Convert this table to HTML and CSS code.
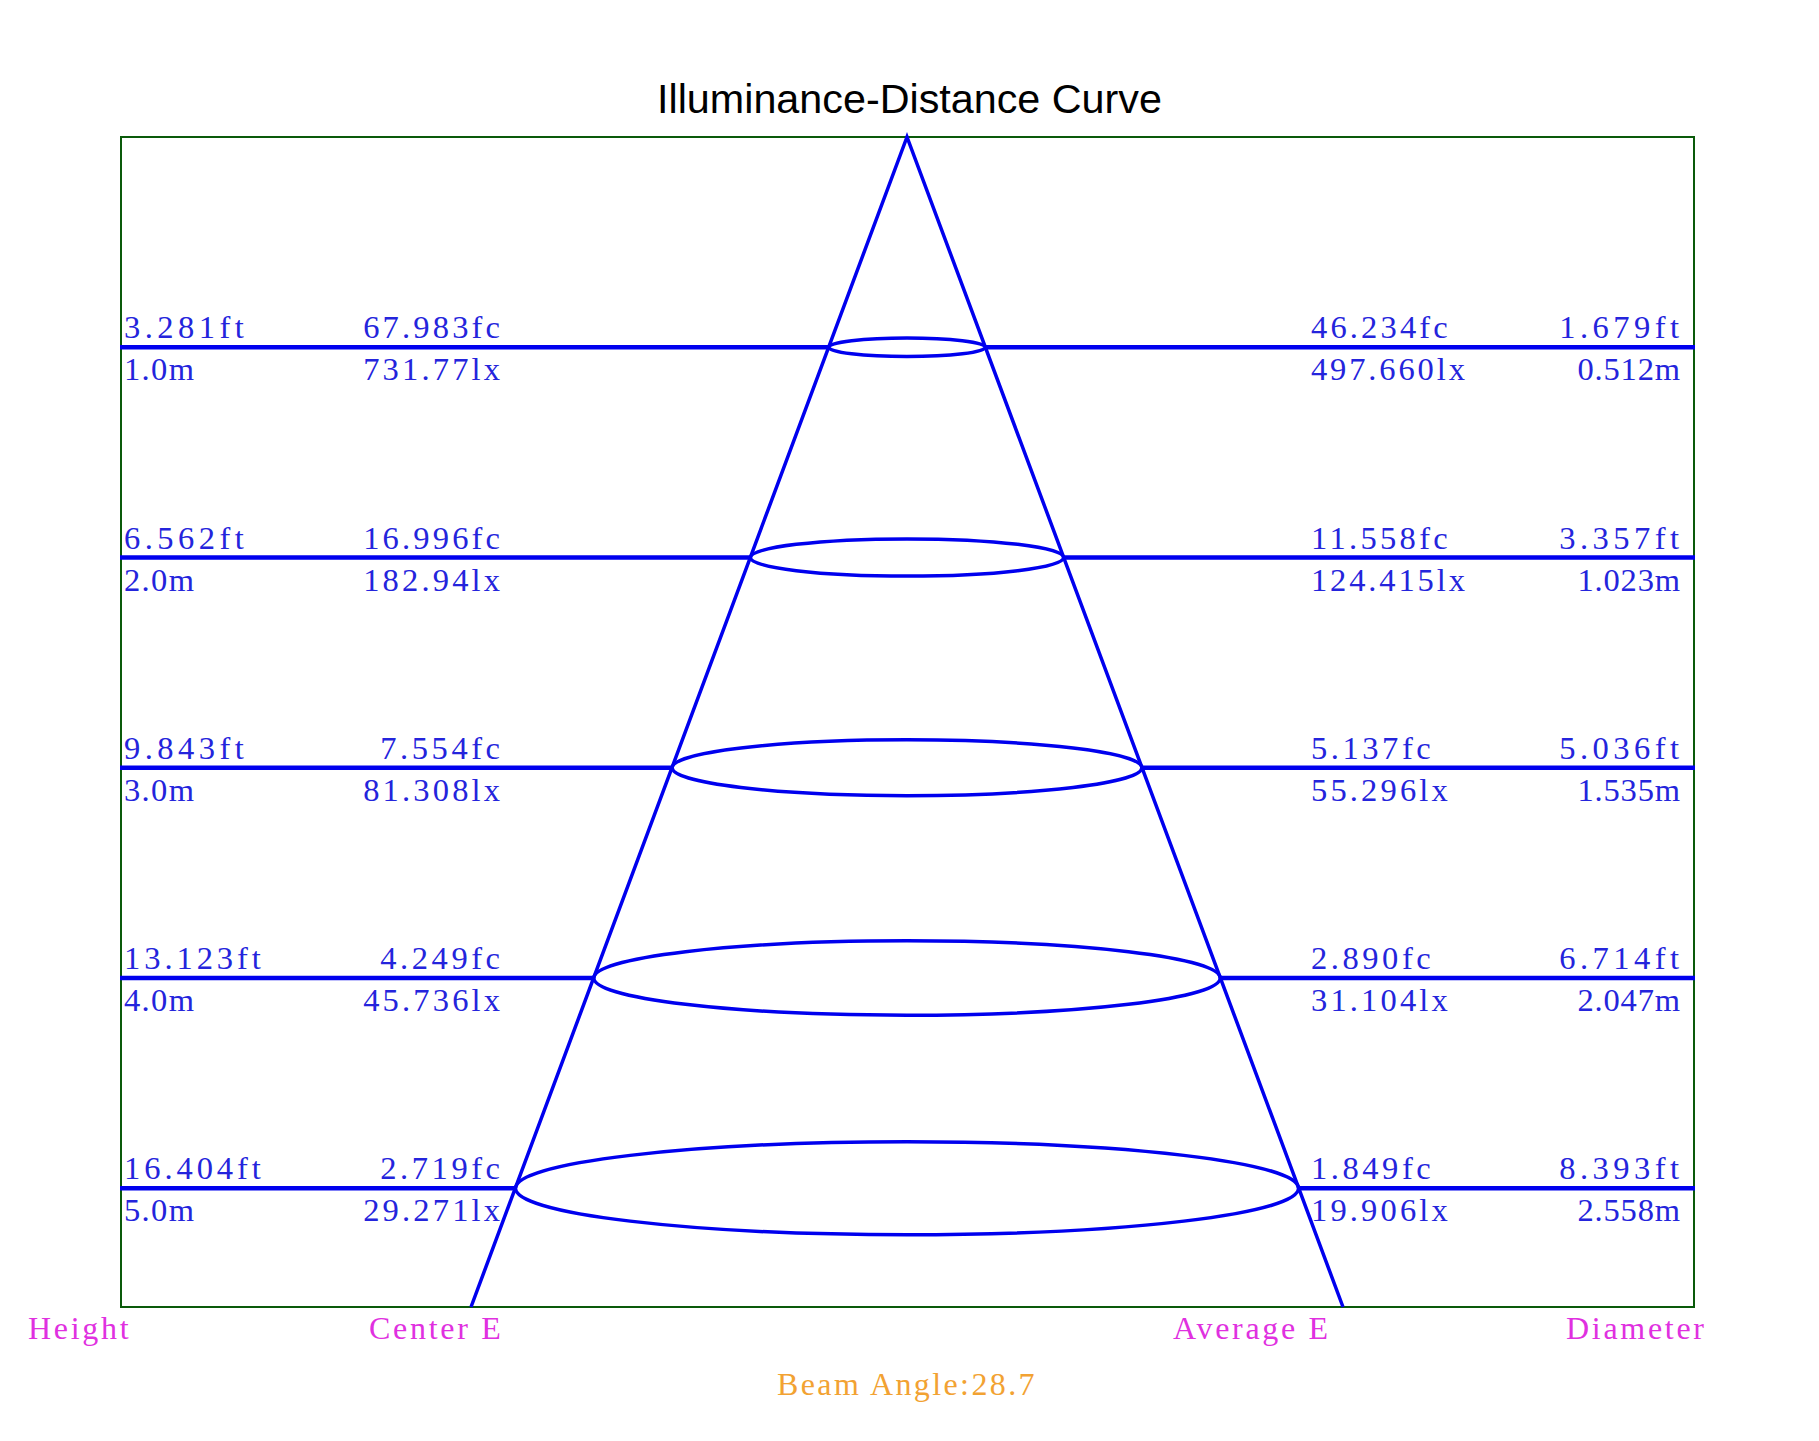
FILE: index.html
```html
<!DOCTYPE html>
<html lang="en">
<head>
<meta charset="utf-8">
<title>Illuminance-Distance Curve</title>
<link rel="stylesheet" href="styles.css">
</head>
<body>
<main class="page">
  <h1 class="title">Illuminance-Distance Curve</h1>
  <svg class="chart" width="1819" height="1187" viewBox="0 123 1819 1187" xmlns="http://www.w3.org/2000/svg">
    <rect class="frame" x="121" y="137" width="1573" height="1170"/>
    <g class="row" transform="translate(0 347.25)">
      <line class="level" x1="120" y1="0" x2="828.7" y2="0"/>
      <line class="level" x1="985.3" y1="0" x2="1695" y2="0"/>
      <ellipse class="spot" cx="907" cy="0" rx="78.3" ry="9.3"/>
      <text class="lbl" x="124" y="-9" textLength="119.7">3.281ft</text>
      <text class="lbl" x="124" y="33" textLength="70">1.0m</text>
      <text class="lbl end" x="500" y="-9" textLength="136.8">67.983fc</text>
      <text class="lbl end" x="500" y="33" textLength="136.8">731.77lx</text>
      <text class="lbl" x="1311" y="-9" textLength="136.8">46.234fc</text>
      <text class="lbl" x="1311" y="33" textLength="153.9">497.660lx</text>
      <text class="lbl end" x="1679" y="-9" textLength="119.7">1.679ft</text>
      <text class="lbl end" x="1680" y="33" textLength="102.6">0.512m</text>
    </g>
    <g class="row" transform="translate(0 557.5)">
      <line class="level" x1="120" y1="0" x2="750.4" y2="0"/>
      <line class="level" x1="1063.6" y1="0" x2="1695" y2="0"/>
      <ellipse class="spot" cx="907" cy="0" rx="156.6" ry="18.6"/>
      <text class="lbl" x="124" y="-9" textLength="119.7">6.562ft</text>
      <text class="lbl" x="124" y="33" textLength="70">2.0m</text>
      <text class="lbl end" x="500" y="-9" textLength="136.8">16.996fc</text>
      <text class="lbl end" x="500" y="33" textLength="136.8">182.94lx</text>
      <text class="lbl" x="1311" y="-9" textLength="136.8">11.558fc</text>
      <text class="lbl" x="1311" y="33" textLength="153.9">124.415lx</text>
      <text class="lbl end" x="1679" y="-9" textLength="119.7">3.357ft</text>
      <text class="lbl end" x="1680" y="33" textLength="102.6">1.023m</text>
    </g>
    <g class="row" transform="translate(0 767.75)">
      <line class="level" x1="120" y1="0" x2="672.1" y2="0"/>
      <line class="level" x1="1141.9" y1="0" x2="1695" y2="0"/>
      <ellipse class="spot" cx="907" cy="0" rx="234.9" ry="27.9"/>
      <text class="lbl" x="124" y="-9" textLength="119.7">9.843ft</text>
      <text class="lbl" x="124" y="33" textLength="70">3.0m</text>
      <text class="lbl end" x="500" y="-9" textLength="119.7">7.554fc</text>
      <text class="lbl end" x="500" y="33" textLength="136.8">81.308lx</text>
      <text class="lbl" x="1311" y="-9" textLength="119.7">5.137fc</text>
      <text class="lbl" x="1311" y="33" textLength="136.8">55.296lx</text>
      <text class="lbl end" x="1679" y="-9" textLength="119.7">5.036ft</text>
      <text class="lbl end" x="1680" y="33" textLength="102.6">1.535m</text>
    </g>
    <g class="row" transform="translate(0 978)">
      <line class="level" x1="120" y1="0" x2="593.8" y2="0"/>
      <line class="level" x1="1220.2" y1="0" x2="1695" y2="0"/>
      <ellipse class="spot" cx="907" cy="0" rx="313.2" ry="37.2"/>
      <text class="lbl" x="124" y="-9" textLength="136.8">13.123ft</text>
      <text class="lbl" x="124" y="33" textLength="70">4.0m</text>
      <text class="lbl end" x="500" y="-9" textLength="119.7">4.249fc</text>
      <text class="lbl end" x="500" y="33" textLength="136.8">45.736lx</text>
      <text class="lbl" x="1311" y="-9" textLength="119.7">2.890fc</text>
      <text class="lbl" x="1311" y="33" textLength="136.8">31.104lx</text>
      <text class="lbl end" x="1679" y="-9" textLength="119.7">6.714ft</text>
      <text class="lbl end" x="1680" y="33" textLength="102.6">2.047m</text>
    </g>
    <g class="row" transform="translate(0 1188.25)">
      <line class="level" x1="120" y1="0" x2="515.5" y2="0"/>
      <line class="level" x1="1298.5" y1="0" x2="1695" y2="0"/>
      <ellipse class="spot" cx="907" cy="0" rx="391.5" ry="46.5"/>
      <text class="lbl" x="124" y="-9" textLength="136.8">16.404ft</text>
      <text class="lbl" x="124" y="33" textLength="70">5.0m</text>
      <text class="lbl end" x="500" y="-9" textLength="119.7">2.719fc</text>
      <text class="lbl end" x="500" y="33" textLength="136.8">29.271lx</text>
      <text class="lbl" x="1311" y="-9" textLength="119.7">1.849fc</text>
      <text class="lbl" x="1311" y="33" textLength="136.8">19.906lx</text>
      <text class="lbl end" x="1679" y="-9" textLength="119.7">8.393ft</text>
      <text class="lbl end" x="1680" y="33" textLength="102.6">2.558m</text>
    </g>
    <polyline class="cone" points="471,1307 907,137 1343,1307"/>
  </svg>
  <div class="legend">
    <span>Height</span>
    <span>Center E</span>
    <span>Average E</span>
    <span>Diameter</span>
  </div>
  <p class="beam">Beam Angle:28.7</p>
</main>
</body>
</html>
```
FILE: styles.css
```css
html, body {
  margin: 0;
  padding: 0;
  background: #ffffff;
}

.page {
  width: 1819px;
  height: 1441px;
  overflow: hidden;
}

.title {
  margin: 0;
  padding-top: 75px;
  height: 48px;
  font-family: "Liberation Sans", Arial, sans-serif;
  font-weight: normal;
  font-size: 41.3px;
  line-height: 48px;
  text-align: center;
  color: #000000;
}

.chart {
  display: block;
}

.frame {
  fill: none;
  stroke: #0a5a0a;
  stroke-width: 2;
}

.level {
  stroke: #0000ee;
  stroke-width: 4.5;
}

.spot {
  fill: none;
  stroke: #0000ee;
  stroke-width: 3.5;
}

.cone {
  fill: none;
  stroke: #0000ee;
  stroke-width: 3.5;
  stroke-linejoin: miter;
}

.lbl {
  font-family: "Liberation Serif", "Times New Roman", serif;
  font-size: 32.5px;
  fill: #2424dc;
}

.end {
  text-anchor: end;
}

.legend {
  display: grid;
  grid-template-columns: 341px 804px 393px auto;
  padding-left: 28px;
  height: 36px;
  font-family: "Liberation Serif", "Times New Roman", serif;
  font-size: 32px;
  line-height: 36px;
  letter-spacing: 2.7px;
  color: #e030e0;
}

.beam {
  margin: 20px 0 0;
  padding-right: 5px;
  text-align: center;
  font-family: "Liberation Serif", "Times New Roman", serif;
  font-size: 32px;
  line-height: 36px;
  letter-spacing: 2.4px;
  color: #f2a232;
}
```
